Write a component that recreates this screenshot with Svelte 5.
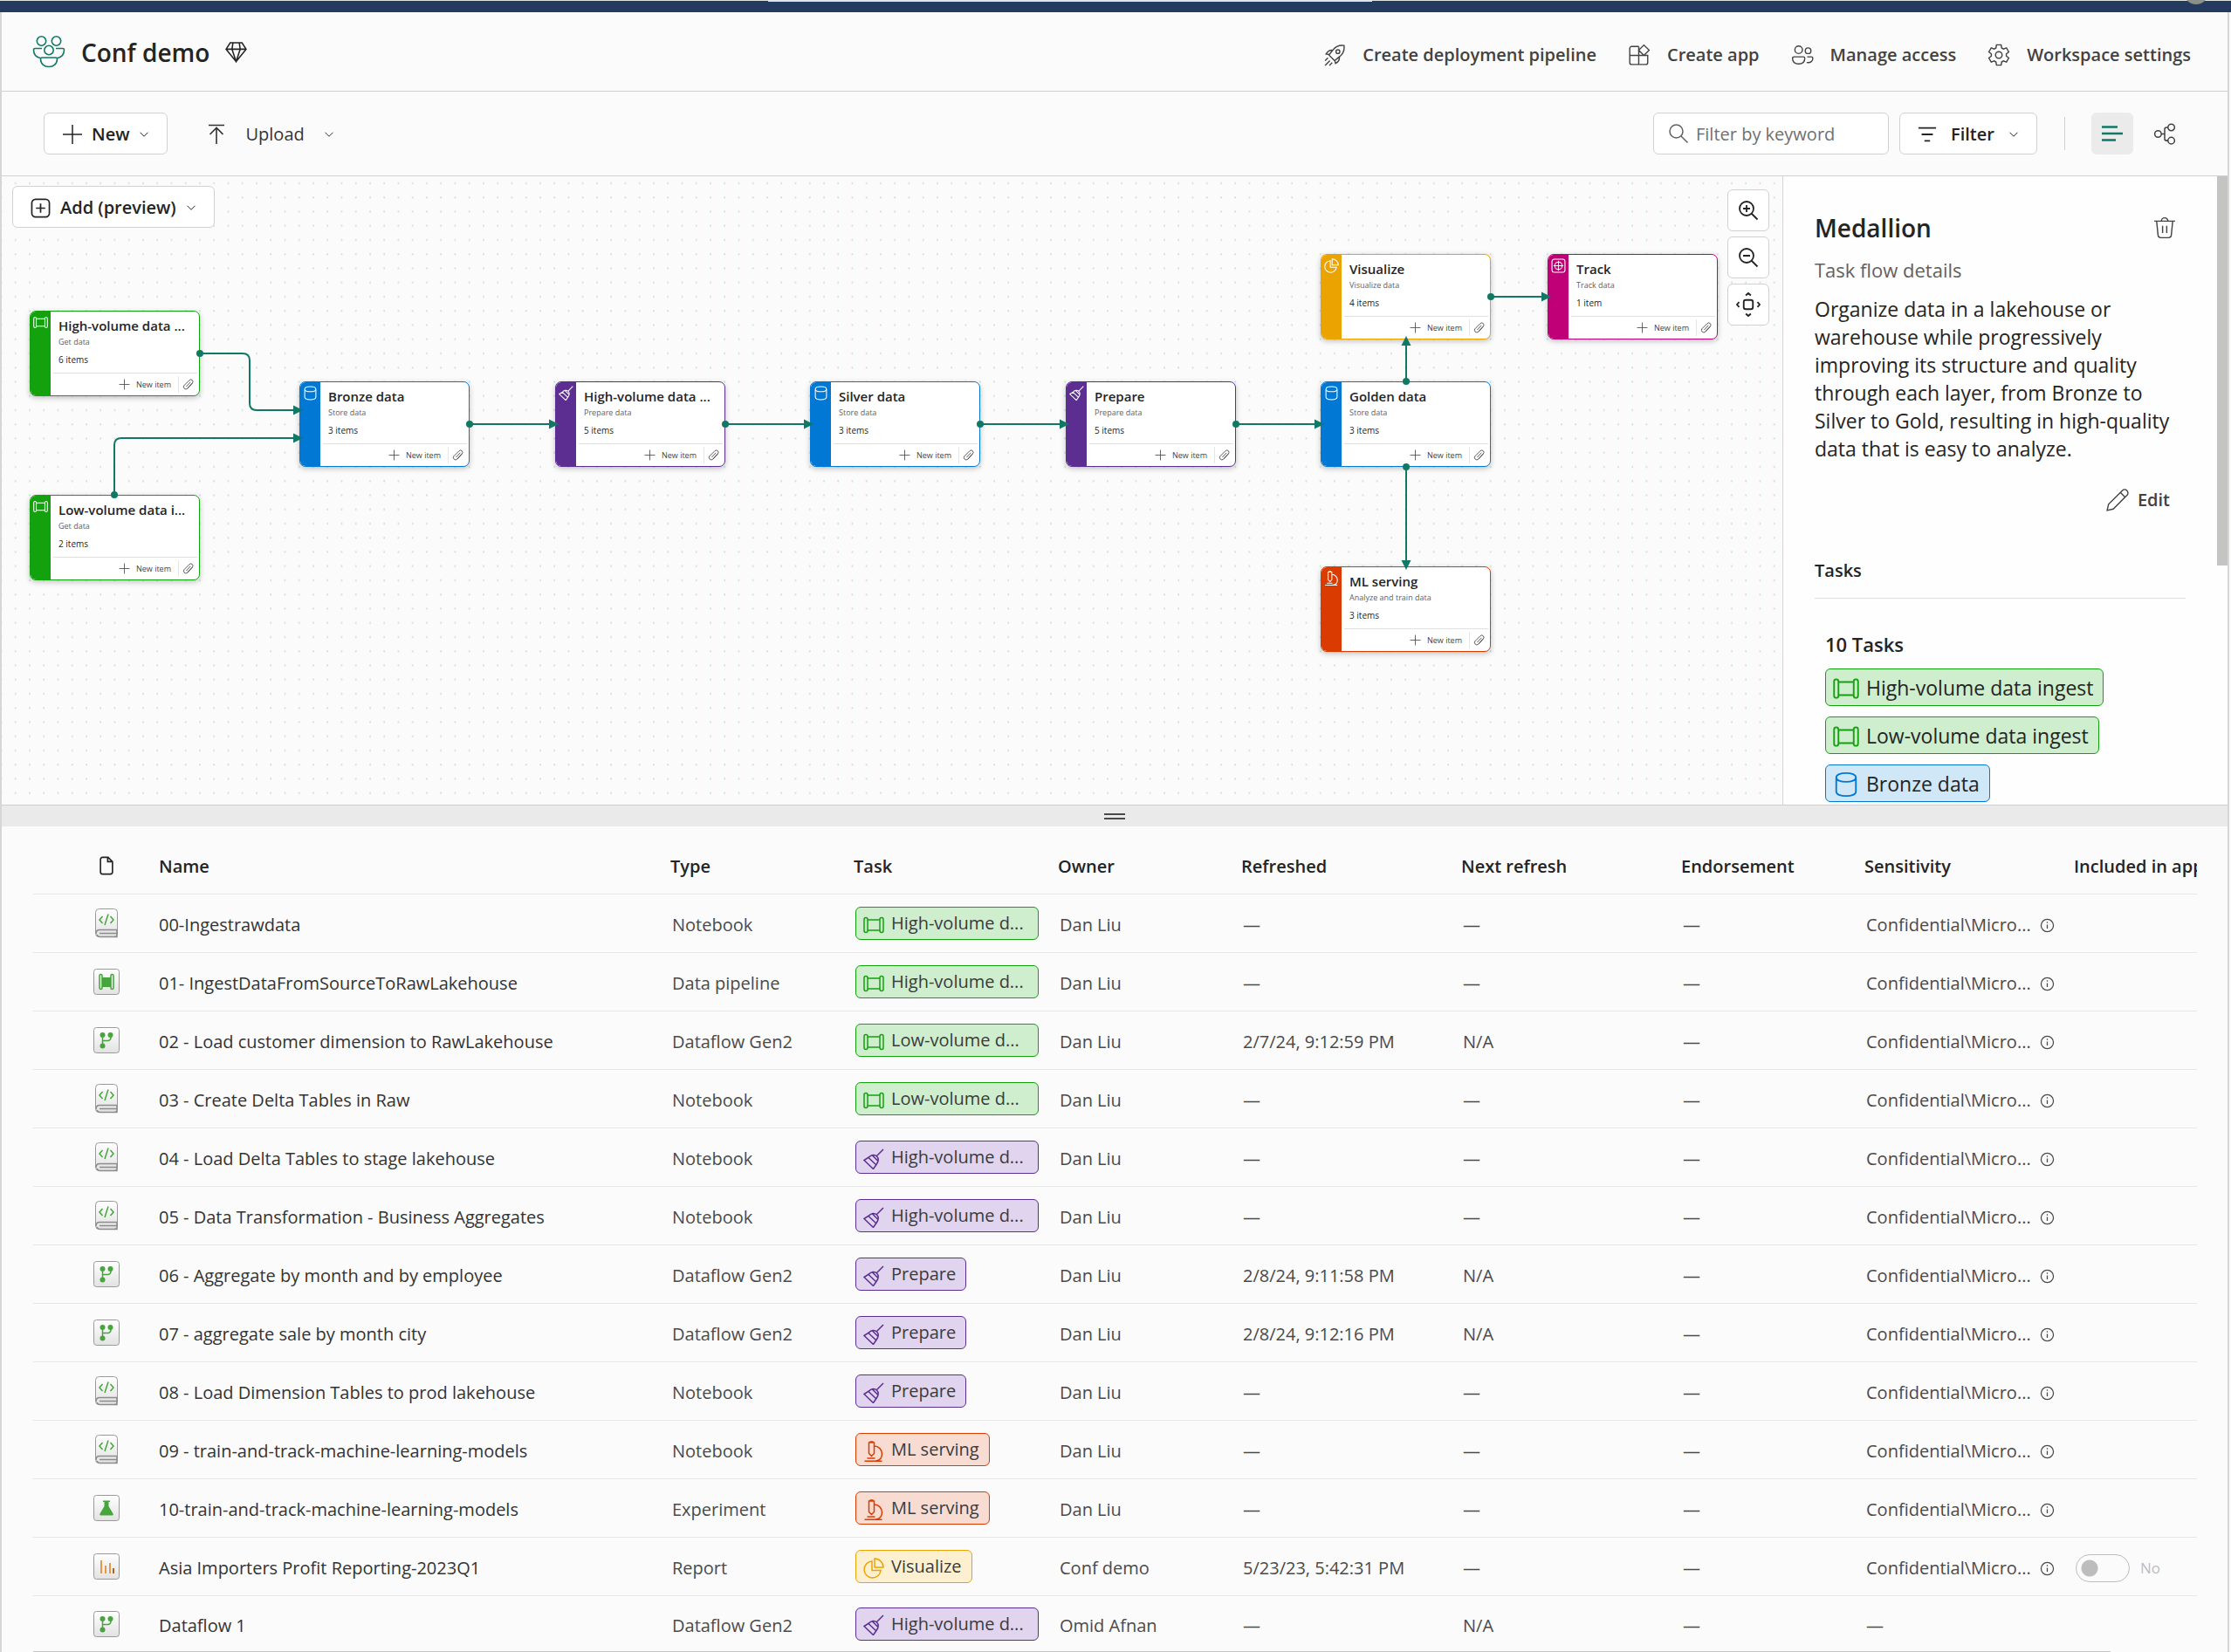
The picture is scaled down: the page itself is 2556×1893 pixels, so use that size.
<script>
	// Line icons, all drawn on a 24x24 grid
	const icons = {
		plus: 'M12 1v22M1 12h22',
		chevron: 'M3 7.5l9 9 9-9',
		upload: 'M3 1.5h18M12 23V5M4.500 12L12 4.500l7.500 7.500',
		diamond: 'M5.500 2h13L23 9 12 22.500 1 9zM1 9h22M8.500 2L7.500 9 12 22.500 16.500 9l-1-7',
		rocket:
			'M22 2c-5-.7-9 1-12 5L6 12l6 6 5-4c4-3 5.700-7 5-12zM10 7c-3-.5-5 .5-7 4l4 .7M17 14c.5 3-.5 5-4 7l-1-4M15.500 10.500a2 2 0 1 0 0-4 2 2 0 0 0 0 4M5 15l-3 3M7 18l-5 5M9.500 20l-3 3',
		app: 'M11.500 3H4a2 2 0 0 0-2 2v15a2 2 0 0 0 2 2h15a2 2 0 0 0 2-2v-7.500H2M11.500 3v19M17 1.500l5.500 5.500-5.500 5.500L11.500 7z',
		people:
			'M8 10.500a4 4 0 1 0 0-8 4 4 0 0 0 0 8M18 10.500a3 3 0 1 0 0-6 3 3 0 0 0 0 6M3 14h10a1.500 1.500 0 0 1 1.500 1.500C14.500 19.500 12 21.500 8 21.500s-6.500-2-6.500-6A1.500 1.500 0 0 1 3 14zM17 14h4.500a1.500 1.500 0 0 1 1.500 1.500c0 3-2 5-6.500 4.500',
		gear: 'M9.53 1.28h4.94L15 4.58l1.93 1.12 3.11-1.2 2.48 4.29-2.6 2.1v2.22l2.6 2.1-2.48 4.29-3.11-1.2L15 19.42l-.53 3.3H9.53L9 19.42 7.07 18.3l-3.11 1.2-2.48-4.29 2.6-2.1v-2.22l-2.6-2.1L3.96 4.5l3.11 1.2L9 4.58zM12 15.500a3.500 3.500 0 1 0 0-7 3.500 3.500 0 0 0 0 7',
		search: 'M9.500 17a7.500 7.500 0 1 0 0-15 7.500 7.500 0 0 0 0 15M15 15l7.500 7.500',
		zoomIn: 'M10 18a8 8 0 1 0 0-16 8 8 0 0 0 0 16M16 16l6.500 6.500M10 6v8M6 10h8',
		zoomOut: 'M10 18a8 8 0 1 0 0-16 8 8 0 0 0 0 16M16 16l6.500 6.500M6 10h8',
		fit: 'M9.500 7.500h5a2 2 0 0 1 2 2v5a2 2 0 0 1-2 2h-5a2 2 0 0 1-2-2v-5a2 2 0 0 1 2-2M9.500 3L12 .8 14.500 3M9.500 21l2.500 2.200 2.500-2.200M3 9.500L.8 12 3 14.500M21 9.500l2.200 2.500-2.200 2.500',
		filter: 'M1 4h22M5 12h14M8.500 20h7',
		graph:
			'M5 16a3.500 3.500 0 1 0 0-7 3.500 3.500 0 0 0 0 7M19 9a3.500 3.500 0 1 0 0-7 3.500 3.500 0 0 0 0 7M19 23a3.500 3.500 0 1 0 0-7 3.500 3.500 0 0 0 0 7M8.500 12.500H12M15.500 5.500H14a2 2 0 0 0-2 2v10a2 2 0 0 0 2 2h1.500',
		boxPlus: 'M6 1.500h12A4.500 4.500 0 0 1 22.500 6v12a4.500 4.500 0 0 1-4.500 4.500H6A4.500 4.500 0 0 1 1.500 18V6A4.500 4.500 0 0 1 6 1.500M12 6.500v11M6.500 12h11',
		trash: 'M1 5h22M3.500 5l1.500 15a3 3 0 0 0 3 2.500h8a3 3 0 0 0 3-2.500L20.500 5M8.500 5a3.500 3.500 0 0 1 7 0M9.800 10v7.500M14.200 10v7.500',
		pencil: 'M1 23l1.500-6.500L17 2a3.500 3.500 0 0 1 5 5L7.500 21.500zM15 4l5 5',
		file: 'M14 1.500H7A2.500 2.500 0 0 0 4.500 4v16A2.500 2.500 0 0 0 7 22.500h10a2.500 2.500 0 0 0 2.500-2.500V7zM13.500 1.500V7h6',
		clip: 'M19 9l-9.500 10.500a4.500 4.500 0 0 1-6.500-6L13.500 3a4 4 0 0 1 6 5.500L10 19M16 6.500l-8.500 9',
		info: 'M12 22a10 10 0 1 0 0-20 10 10 0 0 0 0 20M12 10.500V17M12 6v2',
		pipeline: 'M1 5.500a2 2 0 0 1 4 0v13a2 2 0 0 1-4 0zM19 5.500a2 2 0 0 1 4 0v13a2 2 0 0 1-4 0zM5 6h14M5 18h14',
		store: 'M3 5.500C3 3 7 1.500 12 1.500s9 1.500 9 4-4 4-9 4-9-1.500-9-4v13c0 2.500 4 4 9 4s9-1.500 9-4v-13',
		broom: 'M23 1l-7.500 7.500M1 13.500L6.500 10C9 7 13 6.500 15.500 9s2 6-.5 9.500l-3.500 5zM6 10.500l9 8.500M10.500 8l6 6',
		microscope: 'M6.500 2h6v12.500l-3 3-3-3zM7.500 1h4M12.500 6c5 0 9 4 9 9s-3.500 7.500-7 8M1.500 23.200h20M4.500 20h9',
		pie: 'M10 4A9.500 9.500 0 1 0 20 14.500H10zM13 1v10h10A10 10 0 0 0 13 1z',
		track: 'M5 1.500h14A3.500 3.500 0 0 1 22.500 5v14a3.500 3.500 0 0 1-3.500 3.500H5A3.500 3.500 0 0 1 1.500 19V5A3.500 3.500 0 0 1 5 1.500M12 4v16M4 12h16M12 18a6 6 0 1 0 0-12 6 6 0 0 0 0 12'
	};

	const actions = [
		{ icon: 'rocket', label: 'Create deployment pipeline' },
		{ icon: 'app', label: 'Create app' },
		{ icon: 'people', label: 'Manage access' },
		{ icon: 'gear', label: 'Workspace settings' }
	];

	// x and y are canvas coordinates
	const nodes = [
		{ x: 32, y: 154, kind: 'get', icon: 'pipeline', title: 'High-volume data ...', sub: 'Get data', count: '6 items' },
		{ x: 32, y: 365, kind: 'get', icon: 'pipeline', title: 'Low-volume data i...', sub: 'Get data', count: '2 items' },
		{ x: 341, y: 235, kind: 'store', icon: 'store', title: 'Bronze data', sub: 'Store data', count: '3 items' },
		{ x: 634, y: 235, kind: 'prepare', icon: 'broom', title: 'High-volume data ...', sub: 'Prepare data', count: '5 items' },
		{ x: 926, y: 235, kind: 'store', icon: 'store', title: 'Silver data', sub: 'Store data', count: '3 items' },
		{ x: 1219, y: 235, kind: 'prepare', icon: 'broom', title: 'Prepare', sub: 'Prepare data', count: '5 items' },
		{ x: 1511, y: 235, kind: 'store', icon: 'store', title: 'Golden data', sub: 'Store data', count: '3 items' },
		{ x: 1511, y: 89, kind: 'visualize', icon: 'pie', title: 'Visualize', sub: 'Visualize data', count: '4 items' },
		{ x: 1771, y: 89, kind: 'track', icon: 'track', title: 'Track', sub: 'Track data', count: '1 item' },
		{ x: 1511, y: 447, kind: 'ml', icon: 'microscope', title: 'ML serving', sub: 'Analyze and train data', count: '3 items' }
	];

	const edges = [
		'M227 203H276Q284 203 284 211V260Q284 268 292 268H341',
		'M129 365V308Q129 300 137 300H341',
		'M536 284H634',
		'M829 284H926',
		'M1121 284H1219',
		'M1414 284H1511',
		'M1706 138H1771',
		'M1609 235V187',
		'M1609 333V447'
	];

	const chips = {
		high: { kind: 'get', icon: 'pipeline', label: 'High-volume d...', cut: true },
		low: { kind: 'get', icon: 'pipeline', label: 'Low-volume d...', cut: true },
		highPrep: { kind: 'prepare', icon: 'broom', label: 'High-volume d...', cut: true },
		prep: { kind: 'prepare', icon: 'broom', label: 'Prepare' },
		ml: { kind: 'ml', icon: 'microscope', label: 'ML serving' },
		vis: { kind: 'visualize', icon: 'pie', label: 'Visualize' }
	};

	const tasks = [
		{ kind: 'get', icon: 'pipeline', label: 'High-volume data ingest' },
		{ kind: 'get', icon: 'pipeline', label: 'Low-volume data ingest' },
		{ kind: 'store', icon: 'store', label: 'Bronze data' }
	];

	const columns = ['Name', 'Type', 'Task', 'Owner', 'Refreshed', 'Next refresh', 'Endorsement', 'Sensitivity', 'Included in app'];

	const label = 'Confidential\\Micro...';
	const rows = [
		{ name: '00-Ingestrawdata', type: 'Notebook', task: 'high', owner: 'Dan Liu', label },
		{ name: '01- IngestDataFromSourceToRawLakehouse', type: 'Data pipeline', task: 'high', owner: 'Dan Liu', label },
		{ name: '02 - Load customer dimension to RawLakehouse', type: 'Dataflow Gen2', task: 'low', owner: 'Dan Liu', refreshed: '2/7/24, 9:12:59 PM', next: 'N/A', label },
		{ name: '03 - Create Delta Tables in Raw', type: 'Notebook', task: 'low', owner: 'Dan Liu', label },
		{ name: '04 - Load Delta Tables to stage lakehouse', type: 'Notebook', task: 'highPrep', owner: 'Dan Liu', label },
		{ name: '05 - Data Transformation - Business Aggregates', type: 'Notebook', task: 'highPrep', owner: 'Dan Liu', label },
		{ name: '06 - Aggregate by month and by employee', type: 'Dataflow Gen2', task: 'prep', owner: 'Dan Liu', refreshed: '2/8/24, 9:11:58 PM', next: 'N/A', label },
		{ name: '07 - aggregate sale by month city', type: 'Dataflow Gen2', task: 'prep', owner: 'Dan Liu', refreshed: '2/8/24, 9:12:16 PM', next: 'N/A', label },
		{ name: '08 - Load Dimension Tables to prod lakehouse', type: 'Notebook', task: 'prep', owner: 'Dan Liu', label },
		{ name: '09 - train-and-track-machine-learning-models', type: 'Notebook', task: 'ml', owner: 'Dan Liu', label },
		{ name: '10-train-and-track-machine-learning-models', type: 'Experiment', task: 'ml', owner: 'Dan Liu', label },
		{ name: 'Asia Importers Profit Reporting-2023Q1', type: 'Report', task: 'vis', owner: 'Conf demo', refreshed: '5/23/23, 5:42:31 PM', label, toggle: true },
		{ name: 'Dataflow 1', type: 'Dataflow Gen2', task: 'highPrep', owner: 'Omid Afnan', next: 'N/A' }
	];

	let keyword = $state('');
</script>

{#snippet icon(name, size = 24, width = 1.5)}
	<svg class="icon" width={size} height={size} viewBox="0 0 24 24" stroke-width={width} aria-hidden="true">
		<path d={icons[name]} />
	</svg>
{/snippet}

{#snippet chip(task, size = 24)}
	<span class="chip {task.kind}" class:cut={task.cut}>{@render icon(task.icon, size)}<span>{task.label}</span></span>
{/snippet}

{#snippet typeIcon(type)}
	<svg class="type-icon" width="32" height="36" viewBox="0 0 32 36" aria-hidden="true">
		{#if type === 'Notebook'}
			<rect x="3.500" y="1.500" width="25" height="32" rx="4" fill="url(#tile)" stroke="#9a9a9a" />
			<path d="M4 30c0-3 1-4.500 4-4.500h20M8 29.500h20M5 31c.5 1.500 1.500 2.500 3.500 2.500H28v-8" fill="none" stroke="#8c8c8c" stroke-width="1.500" />
			<path d="M11.500 10L8 14l3.500 4M20.500 10l3.500 4-3.500 4M18 7.500l-4 12.500" fill="none" stroke="#46a53c" stroke-width="1.500" />
		{:else}
			<rect x="1.500" y="3.500" width="29" height="29" rx="3" fill="url(#tile)" stroke="#9a9a9a" />
			{#if type === 'Data pipeline'}
				<path d="M10 13h12v11H10z" fill="#46a53c" />
				<path d="M8 11a1.500 1.500 0 0 1 3 0v14a1.500 1.500 0 0 1-3 0zM21 11a1.500 1.500 0 0 1 3 0v14a1.500 1.500 0 0 1-3 0z" fill="#e9f5e7" stroke="#46a53c" stroke-width="1.500" />
			{:else if type === 'Dataflow Gen2'}
				<path d="M11.500 12v13M21 12v3a3.500 3.500 0 0 1-3.500 3.500h-6" fill="none" stroke="#46a53c" stroke-width="1.500" />
				<circle cx="11.500" cy="12" r="3" fill="#46a53c" />
				<circle cx="20.500" cy="12" r="3" fill="#46a53c" />
				<circle cx="11.500" cy="24.500" r="3" fill="#46a53c" />
			{:else if type === 'Experiment'}
				<path d="M12 9.500h8v1.500h-1.500v5l5 8.500a1.200 1.200 0 0 1-1 2h-13a1.200 1.200 0 0 1-1-2l5-8.500v-5H12z" fill="#46a53c" />
			{:else}
				<path d="M10 11v15M15 17v9M20 14v12" fill="none" stroke="#e09a4a" stroke-width="2" />
				<path d="M24 20v6" stroke="#a8642a" stroke-width="2" />
			{/if}
		{/if}
	</svg>
{/snippet}

<svg class="defs" width="0" height="0" aria-hidden="true">
	<linearGradient id="tile" x1="0" y1="0" x2="0" y2="1">
		<stop offset="0" stop-color="#ffffff" />
		<stop offset="1" stop-color="#e2e2e2" />
	</linearGradient>
</svg>

<div class="page">
	<div class="suite-bar"><span class="tab"></span><span class="avatar"></span></div>

	<div class="workspace">
		<header class="head">
			<svg class="team" width="38" height="38" viewBox="0 0 38 38" aria-hidden="true">
				<circle cx="10.500" cy="7" r="5.200" />
				<circle cx="27.500" cy="7" r="5.200" />
				<circle cx="19" cy="17.500" r="5.200" />
				<path d="M11 15.500H3a1.500 1.500 0 0 0-1.500 1.500c0 5 3 8.500 7.500 9.500M27 15.500h8a1.500 1.500 0 0 1 1.500 1.500c0 5-3 8.500-7.500 9.500" />
				<path d="M11 26h16a1.500 1.500 0 0 1 1.500 1.500c0 5.500-4 9-9.500 9s-9.500-3.500-9.500-9A1.500 1.500 0 0 1 11 26z" />
			</svg>
			<h1>Conf demo</h1>
			{@render icon('diamond', 25, 1.5)}
			<nav class="actions">
				{#each actions as action}
					<button class="plain">{@render icon(action.icon, 26, 1.3)}{action.label}</button>
				{/each}
			</nav>
		</header>

		<div class="toolbar">
			<button class="box new">{@render icon('plus', 24)}New{@render icon('chevron', 12, 2)}</button>
			<button class="plain upload">{@render icon('upload', 24, 1.6)}Upload{@render icon('chevron', 12, 2)}</button>
			<label class="search">
				{@render icon('search', 24)}
				<input type="text" placeholder="Filter by keyword" aria-label="Filter by keyword" bind:value={keyword} />
			</label>
			<button class="box filter">{@render icon('filter', 22, 2)}Filter{@render icon('chevron', 12, 2)}</button>
			<span class="separator"></span>
			<button class="view selected" aria-label="List view">
				<svg width="24" height="24" viewBox="0 0 24 24" aria-hidden="true">
					<path d="M0 4.500h18M0 12h24M0 19.500h16" stroke="#117865" stroke-width="2.500" />
				</svg>
			</button>
			<button class="view" aria-label="Lineage view">{@render icon('graph', 26, 1.4)}</button>
		</div>

		<section class="flow">
			<div class="canvas">
				<svg class="wires" width="100%" height="100%" aria-hidden="true">
					<defs>
						<pattern id="dots" x="8" y="0" width="16.250" height="16.250" patternUnits="userSpaceOnUse">
							<rect x="7" y="7" width="1.500" height="2" fill="#b4e2d2" />
						</pattern>
					</defs>
					<rect width="100%" height="100%" fill="url(#dots)" />
				</svg>

				{#each nodes as node}
					<article class="node {node.kind}" style="left: {node.x}px; top: {node.y}px">
						<div class="stripe">{@render icon(node.icon, 17)}</div>
						<div class="body">
							<h3>{node.title}</h3>
							<p class="sub">{node.sub}</p>
							<p class="count">{node.count}</p>
							<div class="foot">
								<button>{@render icon('plus', 13)}New item</button>
								<button class="attach" aria-label="Attach">{@render icon('clip', 14)}</button>
							</div>
						</div>
					</article>
				{/each}

				<svg class="wires" width="100%" height="100%" aria-hidden="true">
					<defs>
						<marker id="arrow" viewBox="0 0 12 12" refX="8" refY="6" markerWidth="12" markerHeight="12" markerUnits="userSpaceOnUse" orient="auto">
							<path d="M1 0.500L12 6 1 11.500z" fill="#117865" />
						</marker>
						<marker id="start" viewBox="0 0 8 8" refX="4" refY="4" markerWidth="8" markerHeight="8" markerUnits="userSpaceOnUse">
							<circle cx="4" cy="4" r="4" fill="#117865" />
						</marker>
					</defs>
					{#each edges as d}
						<path {d} fill="none" stroke="#117865" stroke-width="2" marker-start="url(#start)" marker-end="url(#arrow)" />
					{/each}
				</svg>

				<button class="box add">{@render icon('boxPlus', 23, 1.8)}Add (preview){@render icon('chevron', 12, 2)}</button>
				<div class="zoom">
					<button class="box" aria-label="Zoom in">{@render icon('zoomIn', 24, 1.8)}</button>
					<button class="box" aria-label="Zoom out">{@render icon('zoomOut', 24, 1.8)}</button>
					<button class="box" aria-label="Fit to screen">{@render icon('fit', 28, 1.6)}</button>
				</div>
			</div>

			<aside class="details">
				<div class="details-body">
					<div class="details-head">
						<h2>Medallion</h2>
						<button class="plain" aria-label="Delete">{@render icon('trash', 26, 1.3)}</button>
					</div>
					<p class="caption">Task flow details</p>
					<p class="text">
						Organize data in a lakehouse or<br />warehouse while progressively<br />improving its structure and quality<br
						/>through each layer, from Bronze to<br />Silver to Gold, resulting in high-quality<br />data that is easy to analyze.
					</p>
					<button class="plain edit">{@render icon('pencil', 26, 1.3)}Edit</button>
					<h4>Tasks</h4>
					<div class="tasks">
						<h5>10 Tasks</h5>
						{#each tasks as task}
							{@render chip(task, 30)}
						{/each}
					</div>
				</div>
				<div class="scroll"><div class="thumb"></div></div>
			</aside>
		</section>

		<div class="splitter"><span></span></div>

		<section class="list">
			<table>
				<colgroup>
					<col class="c-icon" />
					<col />
					<col class="c-type" />
					<col class="c-task" />
					<col class="c-owner" />
					<col class="c-date" />
					<col class="c-date" />
					<col class="c-end" />
					<col class="c-sens" />
					<col class="c-app" />
				</colgroup>
				<thead>
					<tr>
						<th class="center" aria-label="Item type">{@render icon('file', 22, 1.8)}</th>
						{#each columns as column}
							<th>{column}</th>
						{/each}
					</tr>
				</thead>
				<tbody>
					{#each rows as row}
						<tr>
							<td class="center">{@render typeIcon(row.type)}</td>
							<td class="name"><a href="#item">{row.name}</a></td>
							<td>{row.type}</td>
							<td>{@render chip(chips[row.task])}</td>
							<td>{row.owner}</td>
							<td>{row.refreshed ?? '—'}</td>
							<td>{row.next ?? '—'}</td>
							<td>—</td>
							<td>
								{#if row.label}
									<span class="sens">{row.label}{@render icon('info', 17, 1.8)}</span>
								{:else}
									—
								{/if}
							</td>
							<td>
								{#if row.toggle}
									<label class="toggle"><input type="checkbox" disabled />No</label>
								{/if}
							</td>
						</tr>
					{/each}
				</tbody>
			</table>
			<div class="hscroll"></div>
		</section>
	</div>
</div>

<style>
	:global(body) {
		margin: 0;
		overflow: hidden;
	}

	.page {
		display: flex;
		flex-direction: column;
		height: 100vh;
		overflow: hidden;
		background: #fbfbfb;
		color: #242424;
		font-family: 'Open Sans', 'Noto Sans', sans-serif;
		font-size: 20px;
		line-height: 28px;
	}

	h1,
	h2,
	h3,
	h4,
	h5,
	p {
		margin: 0;
		font-weight: 600;
	}

	p {
		font-weight: 400;
	}

	button,
	input {
		font: inherit;
		color: inherit;
	}

	button {
		display: flex;
		align-items: center;
		padding: 0;
		border: 0;
		background: none;
		white-space: nowrap;
	}

	.defs {
		position: absolute;
	}

	.icon {
		flex: none;
		fill: none;
		stroke: currentColor;
	}

	.suite-bar {
		position: relative;
		flex: none;
		height: 13px;
		border-top: 1px solid #dde5df;
		background: #243a5e;
	}

	.tab {
		position: absolute;
		left: 880px;
		top: -1px;
		width: 692px;
		height: 2px;
		background: #dfe3ea;
	}

	.avatar {
		position: absolute;
		right: 26px;
		top: -24px;
		width: 28px;
		height: 28px;
		border-radius: 50%;
		background: #8d9089;
	}

	.workspace {
		display: flex;
		flex: 1;
		flex-direction: column;
		min-height: 0;
		margin-right: 2px;
		border: solid #d6d6d6;
		border-width: 0 2px;
	}

	.head {
		display: flex;
		flex: none;
		align-items: center;
		height: 90px;
		padding: 0 42px 0 35px;
		border-bottom: 1px solid #d1d1d1;
	}

	.team {
		fill: none;
		stroke: #117865;
		stroke-width: 1.6;
	}

	h1 {
		margin: 0 18px 0 18px;
		padding-top: 2px;
		font-size: 28px;
		line-height: 40px;
	}

	.actions {
		display: flex;
		gap: 36px;
		margin-left: auto;
		padding-top: 8px;
		color: #424242;
		font-weight: 600;
	}

	.actions button {
		gap: 19px;
		font-weight: 600;
	}

	.toolbar {
		display: flex;
		flex: none;
		align-items: center;
		height: 96px;
		padding: 0 48px;
		border-bottom: 1px solid #d1d1d1;
	}

	.box {
		box-sizing: border-box;
		justify-content: center;
		height: 48px;
		border: 1px solid #d1d1d1;
		border-radius: 6px;
		background: #ffffff;
		font-weight: 600;
	}

	.new {
		gap: 10px;
		padding: 2px 20px 0;
	}

	.upload {
		gap: 22px;
		margin-left: 44px;
		padding-top: 2px;
		color: #333333;
	}

	.search {
		display: flex;
		box-sizing: border-box;
		align-items: center;
		gap: 8px;
		width: 270px;
		height: 48px;
		margin-left: auto;
		padding: 0 16px;
		border: 1px solid #d1d1d1;
		border-radius: 6px;
		background: #ffffff;
		color: #616161;
	}

	.search input {
		flex: 1;
		min-width: 0;
		padding: 2px 0 0;
		border: 0;
		outline: 0;
		background: none;
	}

	.search input::placeholder {
		color: #707070;
		opacity: 1;
	}

	.filter {
		gap: 16px;
		width: 158px;
		margin-left: 12px;
		padding-top: 2px;
	}

	.separator {
		width: 1px;
		height: 38px;
		margin: 0 30px 0 31px;
		background: #d1d1d1;
	}

	.view {
		justify-content: center;
		width: 48px;
		height: 48px;
		border-radius: 6px;
		color: #424242;
	}

	.view + .view {
		margin-left: 12px;
	}

	.selected {
		background: #ebebeb;
	}

	.flow {
		display: flex;
		flex: none;
	}

	.canvas {
		position: relative;
		flex: 1;
		overflow: hidden;
	}

	.wires {
		position: absolute;
		inset: 0;
	}

	.add {
		position: absolute;
		left: 12px;
		top: 11px;
		gap: 11px;
		padding: 2px 20px 0;
	}

	.zoom {
		position: absolute;
		right: 15px;
		top: 15px;
		display: grid;
		gap: 6px;
	}

	.zoom .box {
		width: 48px;
	}

	.get {
		--tone: #13a10e;
		--fill: #ceeecd;
	}

	.store {
		--tone: #0078d4;
		--fill: #d0e7f8;
	}

	.prepare {
		--tone: #5c2e91;
		--fill: #e0d4ee;
	}

	.visualize {
		--tone: #eaa300;
		--fill: #fdf0d0;
	}

	.track {
		--tone: #bf0077;
		--fill: #f5cce4;
	}

	.ml {
		--tone: #da3b01;
		--fill: #f9dcd1;
	}

	.node {
		position: absolute;
		display: flex;
		box-sizing: border-box;
		width: 195px;
		height: 98px;
		overflow: hidden;
		border: 1px solid var(--tone);
		border-radius: 7px;
		background: #ffffff;
		box-shadow: 0 2px 6px rgba(0, 0, 0, 0.24);
	}

	.stripe {
		flex: none;
		width: 23px;
		padding-top: 4px;
		background: var(--tone);
		color: #ffffff;
		text-align: center;
		line-height: 16px;
	}

	.body {
		display: flex;
		flex: 1;
		flex-direction: column;
		min-width: 0;
		padding: 5px 2px 0 3px;
	}

	.node h3,
	.node p {
		padding-left: 6px;
		white-space: nowrap;
	}

	.node h3 {
		font-size: 15px;
		line-height: 22px;
	}

	.node .sub {
		color: #616161;
		font-size: 9px;
		line-height: 15px;
	}

	.node .count {
		font-size: 10px;
		line-height: 27px;
	}

	.foot {
		display: flex;
		flex: 1;
		justify-content: flex-end;
		margin-top: 1px;
		border-top: 1px solid #e0e0e0;
		color: #424242;
		font-size: 9px;
		line-height: 14px;
	}

	.foot button {
		gap: 7px;
		margin: 3px 0;
		padding-right: 8px;
	}

	.foot .attach {
		padding: 0 3px 0 4px;
		border-left: 1px solid #e6e6e6;
	}

	.details {
		display: flex;
		width: 509px;
		border-left: 1px solid #d6d6d6;
		background: #fefefe;
	}

	.details-body {
		flex: 1;
		padding: 40px 36px 3px;
	}

	.details-head {
		display: flex;
		align-items: center;
		justify-content: space-between;
		padding-right: 11px;
		color: #424242;
	}

	h2 {
		color: #242424;
		font-size: 28px;
		line-height: 38px;
	}

	.caption {
		padding-top: 13px;
		color: #616161;
		font-size: 22px;
		line-height: 32px;
	}

	.text {
		padding-top: 13px;
		font-size: 23px;
		line-height: 32px;
		white-space: nowrap;
	}

	.edit {
		gap: 10px;
		margin: 29px 18px 0 auto;
		color: #424242;
		font-weight: 600;
	}

	h4 {
		padding: 53px 0 17px;
		border-bottom: 1px solid #dedede;
		font-size: 20px;
		line-height: 28px;
	}

	.tasks {
		display: flex;
		flex-direction: column;
		align-items: flex-start;
		gap: 12px;
		padding: 36px 0 0 12px;
	}

	h5 {
		font-size: 22px;
		line-height: 32px;
	}

	.chip {
		display: inline-flex;
		box-sizing: border-box;
		align-items: center;
		gap: 8px;
		height: 38px;
		padding: 0 11px 0 8px;
		border: 1px solid var(--tone);
		border-radius: 6px;
		background: var(--fill);
		vertical-align: middle;
		white-space: nowrap;
	}

	.cut {
		width: 210px;
	}

	.chip :global(.icon) {
		margin-top: 3px;
		stroke: var(--tone);
	}

	.tasks .chip {
		height: 43px;
		font-size: 23px;
	}

	.scroll {
		width: 12px;
	}

	.thumb {
		height: 62%;
		background: #c4c4c3;
	}

	.splitter {
		display: flex;
		flex: none;
		align-items: center;
		justify-content: center;
		height: 24px;
		border-top: 1px solid #cfcfcf;
		background: #eaeaea;
	}

	.splitter span {
		width: 24px;
		height: 3px;
		border: solid #4a4a4a;
		border-width: 2px 0;
	}

	.list {
		flex: 1;
		min-height: 0;
		overflow: hidden;
		padding: 13px 35px 0 36px;
	}

	table {
		width: 100%;
		table-layout: fixed;
		border-spacing: 0;
	}

	.c-icon {
		width: 144px;
	}

	.c-type,
	.c-owner,
	.c-end {
		width: 210px;
	}

	.c-task {
		width: 234px;
	}

	.c-date {
		width: 252px;
	}

	.c-sens {
		width: 240px;
	}

	.c-app {
		width: 141px;
	}

	th,
	td {
		box-sizing: border-box;
		height: 67px;
		padding: 4px 0 0 2px;
		overflow: hidden;
		border-bottom: 1px solid #e6e6e6;
		color: #4a4a4a;
		text-align: left;
		white-space: nowrap;
	}

	th {
		height: 65px;
		padding: 2px 0 0;
		color: #242424;
		font-weight: 600;
	}

	.center {
		padding: 0 0 0 24px;
		text-align: center;
		line-height: 0;
	}

	.name {
		padding-left: 0;
	}

	a {
		color: #333333;
		text-decoration: none;
	}

	td .chip {
		margin-bottom: 4px;
		color: #3b3b3b;
	}

	.sens {
		display: flex;
		align-items: center;
		gap: 10px;
	}

	.toggle {
		display: flex;
		align-items: center;
		gap: 12px;
		color: #bdbdbd;
		font-size: 17px;
	}

	.toggle input {
		box-sizing: border-box;
		width: 62px;
		height: 32px;
		margin: 0;
		border: 1px solid #bdbdbd;
		border-radius: 16px;
		appearance: none;
		background: radial-gradient(circle at 15px 15px, #bdbdbd 9px, transparent 10px);
	}

	tbody tr:last-child td {
		height: 63px;
		border-bottom: 0;
	}

	.hscroll {
		width: 96%;
		height: 12px;
		background: #c4c4c4;
	}
</style>
